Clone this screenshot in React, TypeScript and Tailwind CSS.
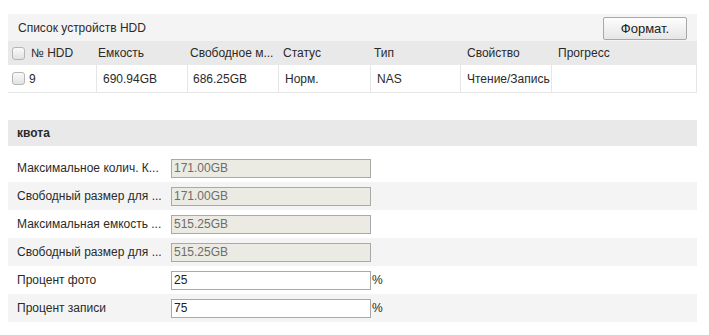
const cols = ["№ HDD", "Емкость", "Свободное м...", "Статус", "Тип", "Свойство", "Прогресс"];

function Check() {
  return (
    <span className="inline-block w-[13px] h-[13px] rounded-[3px] border border-[#b5b5b5] bg-gradient-to-b from-[#fafafa] to-[#e2e2e2] shrink-0" />
  );
}

const quota = [
  { label: "Максимальное колич. К...", value: "171.00GB", disabled: true },
  { label: "Свободный размер для ...", value: "171.00GB", disabled: true },
  { label: "Максимальная емкость ...", value: "515.25GB", disabled: true },
  { label: "Свободный размер для ...", value: "515.25GB", disabled: true },
  { label: "Процент фото", value: "25", disabled: false, unit: "%" },
  { label: "Процент записи", value: "75", disabled: false, unit: "%" },
];

export default function App() {
  return (
    <div className="w-[709px] h-[335px] bg-white font-['Liberation_Sans',Arial,sans-serif] text-[12px] text-[#2a2a2a] overflow-hidden">
      <div className="pt-[14px] pl-[8px] w-[697px]">
        {/* HDD list */}
        <div className="h-[27px] bg-[#f4f4f4] flex items-center justify-between pl-[10px] pr-[10px]">
          <span>Список устройств HDD</span>
          <button className="h-[23px] w-[84px] mt-[2px] border border-[#a8a8a8] rounded-[2px] bg-gradient-to-b from-[#fdfdfd] to-[#e6e6e6] text-[13px] text-[#222]">
            Формат.
          </button>
        </div>
        <div className="grid grid-cols-[89px_91px_91px_92px_90px_91px_145px] h-[24px] bg-[#e9e9e9] items-center">
          <div className="flex items-center gap-[6px] pl-[4px]">
            <Check />
            <span>{cols[0]}</span>
          </div>
          <span className="pl-[1px]">{cols[1]}</span>
          <span className="pl-[2px]">{cols[2]}</span>
          <span className="pl-[4px]">{cols[3]}</span>
          <span className="pl-[3px]">{cols[4]}</span>
          <span className="pl-[6px]">{cols[5]}</span>
          <span className="pl-[6px]">{cols[6]}</span>
        </div>
        <div className="grid grid-cols-[89px_91px_91px_92px_90px_91px_145px] h-[28px] bg-white border-b border-r border-[#e6e6e6]">
          <div className="flex items-center gap-[4px] pl-[4px] border-r border-[#e6e6e6]">
            <Check />
            <span>9</span>
          </div>
          <div className="flex items-center pl-[6px] border-r border-[#e6e6e6]">690.94GB</div>
          <div className="flex items-center pl-[5px] border-r border-[#e6e6e6]">686.25GB</div>
          <div className="flex items-center pl-[6px] border-r border-[#e6e6e6]">Норм.</div>
          <div className="flex items-center pl-[6px] border-r border-[#e6e6e6]">NAS</div>
          <div className="flex items-center pl-[6px] border-r border-[#e6e6e6]">Чтение/Запись</div>
          <div />
        </div>

        {/* quota */}
        <div className="mt-[27px] h-[26px] bg-[#e9e9e9] flex items-center pl-[9px] font-bold">квота</div>
        <div className="mt-[8px]">
          {quota.map((q, i) => (
            <div
              key={i}
              className={`h-[28px] flex items-center ${i % 2 === 1 ? "bg-[#f4f4f4]" : "bg-white"}`}
            >
              <span className="w-[163px] pl-[9px] whitespace-nowrap">{q.label}</span>
              <div
                className={`w-[200px] h-[19px] border flex items-center pl-[2px] ${
                  q.disabled
                    ? "bg-[#ebebe4] border-[#a9a9a9] text-[#6d6d6d]"
                    : "bg-white border-[#a9a9a9] text-[#222]"
                }`}
              >
                {q.value}
              </div>
              {q.unit && <span className="pl-[1px]">{q.unit}</span>}
            </div>
          ))}
        </div>
      </div>
    </div>
  );
}
